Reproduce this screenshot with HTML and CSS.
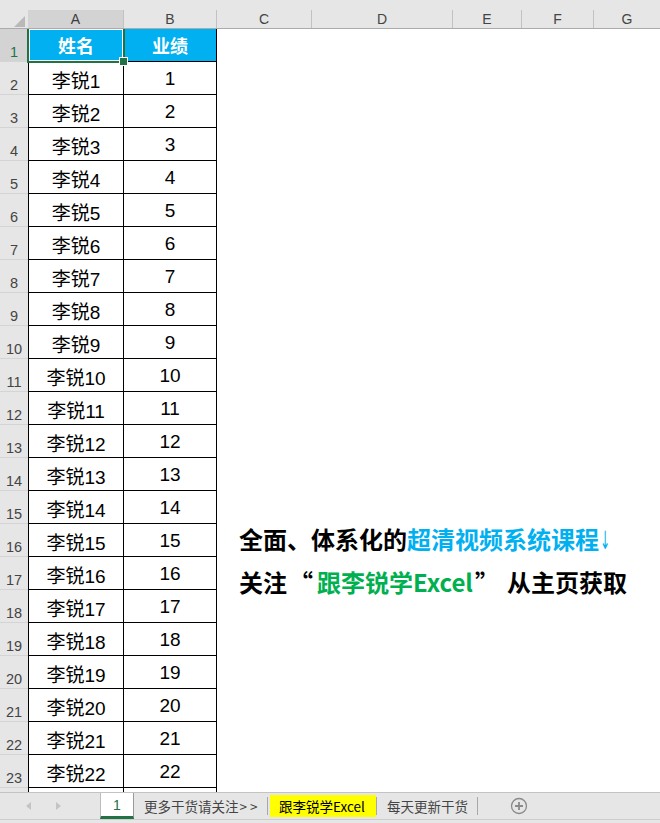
FILE: index.html
```html
<!DOCTYPE html>
<html lang="zh">
<head>
<meta charset="utf-8">
<title>Sheet</title>
<link rel="stylesheet" href="styles.css">
</head>
<body>
<div class="app">
  <div class="topstrip"></div>
  <div class="colhdr">
    <div class="corner"><svg class="tri" width="28" height="19" viewBox="0 0 28 19"><polygon points="25,6 25,17 14,17" fill="#b9b9b9"/></svg></div>
    <div class="ch sel w-a">A</div>
    <div class="ch w-b">B</div>
    <div class="ch w-c">C</div>
    <div class="ch w-d">D</div>
    <div class="ch w-e">E</div>
    <div class="ch w-f">F</div>
    <div class="ch w-g">G</div>
  </div>
  <div class="sheet">
    <div class="rowhdr">
      <div class="rh sel">1</div><div class="rh">2</div><div class="rh">3</div><div class="rh">4</div>
      <div class="rh">5</div><div class="rh">6</div><div class="rh">7</div><div class="rh">8</div>
      <div class="rh">9</div><div class="rh">10</div><div class="rh">11</div><div class="rh">12</div>
      <div class="rh">13</div><div class="rh">14</div><div class="rh">15</div><div class="rh">16</div>
      <div class="rh">17</div><div class="rh">18</div><div class="rh">19</div><div class="rh">20</div>
      <div class="rh">21</div><div class="rh">22</div><div class="rh">23</div><div class="rh">24</div>
    </div>
    <div class="table">
      <div class="c head active">姓名</div><div class="c head">业绩</div>
      <div class="c">李锐1</div><div class="c">1</div>
      <div class="c">李锐2</div><div class="c">2</div>
      <div class="c">李锐3</div><div class="c">3</div>
      <div class="c">李锐4</div><div class="c">4</div>
      <div class="c">李锐5</div><div class="c">5</div>
      <div class="c">李锐6</div><div class="c">6</div>
      <div class="c">李锐7</div><div class="c">7</div>
      <div class="c">李锐8</div><div class="c">8</div>
      <div class="c">李锐9</div><div class="c">9</div>
      <div class="c">李锐10</div><div class="c">10</div>
      <div class="c">李锐11</div><div class="c">11</div>
      <div class="c">李锐12</div><div class="c">12</div>
      <div class="c">李锐13</div><div class="c">13</div>
      <div class="c">李锐14</div><div class="c">14</div>
      <div class="c">李锐15</div><div class="c">15</div>
      <div class="c">李锐16</div><div class="c">16</div>
      <div class="c">李锐17</div><div class="c">17</div>
      <div class="c">李锐18</div><div class="c">18</div>
      <div class="c">李锐19</div><div class="c">19</div>
      <div class="c">李锐20</div><div class="c">20</div>
      <div class="c">李锐21</div><div class="c">21</div>
      <div class="c">李锐22</div><div class="c">22</div>
      <div class="c"></div><div class="c"></div>
    </div>
    <div class="blank">
      <p class="promo"><span class="k">全面、体系化的</span><span class="blue">超清视频系统课程<span class="arrow">↓</span></span></p>
      <p class="promo"><span class="k">关注<span class="q ql">“</span></span><span class="green">跟李锐学Excel</span><span class="k"><span class="q qr">”</span>从主页获取</span></p>
    </div>
  </div>
  <div class="tabbar">
    <div class="tabrow">
      <div class="nav">
        <svg width="8" height="10" viewBox="0 0 8 10"><polygon points="6,1 6,9 1,5" fill="#c4c4c4"/></svg>
        <svg width="8" height="10" viewBox="0 0 8 10"><polygon points="2,1 2,9 7,5" fill="#c4c4c4"/></svg>
      </div>
      <div class="tab active">1</div>
      <div class="tab t2">更多干货请关注<span class="gt">&gt;&gt;</span></div>
      <div class="sep"></div>
      <div class="tab yellow">跟李锐学Excel</div>
      <div class="sep"></div>
      <div class="tab t4">每天更新干货</div>
      <div class="sep"></div>
      <div class="add">
        <svg width="18" height="18" viewBox="0 0 18 18"><circle cx="9" cy="9" r="7.5" fill="none" stroke="#8a8a8a" stroke-width="1.3"/><path d="M9 5v8M5 9h8" stroke="#8a8a8a" stroke-width="1.8"/></svg>
      </div>
    </div>
  </div>
</div>
</body>
</html>
```
FILE: styles.css
```css
* { box-sizing: border-box; }
html, body { margin: 0; padding: 0; }
body { width: 660px; height: 823px; overflow: hidden; background: #fff; font-family: "Liberation Sans", "Noto Sans CJK SC", sans-serif; }
.app { width: 660px; height: 823px; display: flex; flex-direction: column; overflow: hidden; }

.topstrip { height: 10px; background: #e6e6e6; flex: none; }

.colhdr { height: 19px; flex: none; display: flex; background: #e6e6e6; border-bottom: 1px solid #ababab; }
.corner { width: 28px; flex: none; position: relative; }
.tri { display: block; }
.ch { flex: none; border-right: 1px solid #c2c2c2; font-size: 14px; color: #444; text-align: center; line-height: 19px; }
.ch.sel { background: #d3d3d3; color: #3d3d3d; }
.w-a { width: 96px; }
.w-b { width: 93px; }
.w-c { width: 95px; }
.w-d { width: 141px; }
.w-e { width: 69px; }
.w-f { width: 72px; }
.w-g { flex: 1 1 auto; border-right: none; }

.sheet { height: 763px; flex: none; display: flex; overflow: hidden; }
.rowhdr { width: 28px; flex: none; background: #e6e6e6; }
.rh { height: 33px; border-bottom: 1px solid #d4d4d4; font-size: 14.5px; color: #444; text-align: center; display: flex; align-items: flex-end; justify-content: center; padding-bottom: 0; line-height: 17px; }
.rh.sel { background: #d3d3d3; color: #217346; }

.table { width: 189px; flex: none; display: grid; grid-template-columns: 95px 93px; grid-auto-rows: 33px; border-left: 1px solid #000; align-content: start; }
.c { border-right: 1px solid #000; border-bottom: 1px solid #000; font-size: 19px; color: #000; display: flex; align-items: center; justify-content: center; padding-top: 2px; }
.c.head { background: #00b0f0; color: #fff; font-weight: bold; font-family: "Noto Sans CJK SC", sans-serif; font-size: 18px; padding-top: 0; }
.c.active { position: relative; }
.c.active::before { content: ""; position: absolute; left: -2px; top: -2px; right: -2px; bottom: -2px; border: 2px solid #217346; box-shadow: inset 0 0 0 1px #fff; }
.c.active::after { content: ""; position: absolute; right: -5px; bottom: -5px; width: 7px; height: 7px; background: #217346; border: 1px solid #fff; }

.blank { flex: 1 1 auto; padding: 488px 0 0 22px; }
.promo { margin: 0; font-family: "Noto Sans CJK SC", sans-serif; font-weight: bold; font-size: 24px; line-height: 43px; white-space: nowrap; }
.q { display: inline-block; width: 30px; }
.ql { text-align: right; padding-right: 4px; }
.qr { text-align: left; padding-left: 2px; width: 34px; }
.arrow { display: inline-block; font-family: "DejaVu Sans", sans-serif; font-weight: normal; font-size: 24px; line-height: 24px; transform: scale(0.5, 1.05); transform-origin: left center; margin-left: 1px; width: 12px; }
.k { color: #000; }
.blue { color: #00b0f0; }
.green { color: #00b050; }

.tabbar { flex: 1 1 auto; background: #e6e6e6; border-top: 1px solid #c3c3c3; }
.tabrow { height: 27px; display: flex; align-items: stretch; border-bottom: 1px solid #cdcdcd; }
.nav { width: 100px; flex: none; display: flex; align-items: center; padding-left: 25px; gap: 21px; }
.nav svg { display: block; }
.tab { flex: none; font-family: "Noto Sans CJK SC", sans-serif; font-size: 13.5px; color: #444; display: flex; align-items: center; }
.tab.active { width: 34px; background: #fff; border-left: 1px solid #bdbdbd; border-right: 1px solid #9a9a9a; border-bottom: 3px solid #217346; justify-content: center; color: #217346; font-family: "Liberation Sans", sans-serif; font-size: 14px; }
.tab.t2 { width: 133px; padding-left: 10px; }
.gt { letter-spacing: 3px; margin-left: 1px; }
.sep { width: 1px; flex: none; background: #a8a8a8; margin: 4px 0 4px 0; }
.tab.yellow { width: 106px; background: #ffff00; color: #000; margin: 2px 0 2px 2px; padding-left: 9px; }
.tab.t4 { width: 100px; padding-left: 10px; }
.add { width: 80px; flex: none; display: flex; align-items: center; padding-left: 32px; }
.add svg { display: block; }
```
